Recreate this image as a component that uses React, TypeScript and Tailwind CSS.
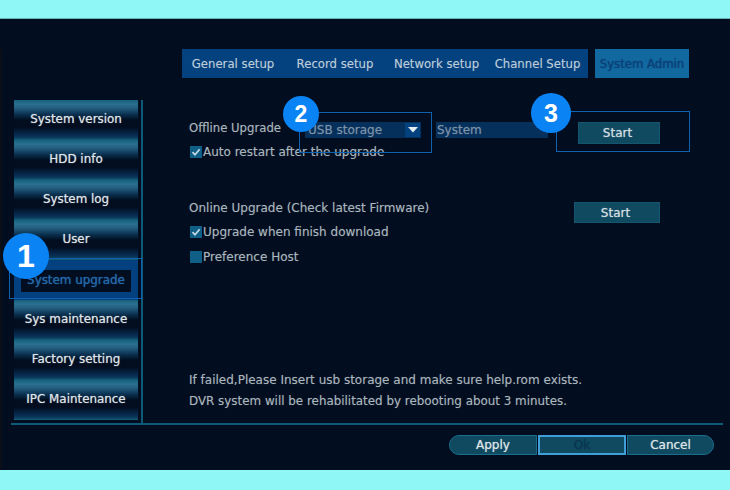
const SIDE = ["System version", "HDD info", "System log", "User", "System upgrade", "Sys maintenance", "Factory setting", "IPC Maintenance"];
const TABS: [string, string][] = [
  ["General setup", "w-[102px]"],
  ["Record setup", "w-[102px]"],
  ["Network setup", "w-[101px]"],
  ["Channel Setup", "w-[101px]"],
];

function Check({ on = true }: { on?: boolean }) {
  return (
    <span className="w-[12px] h-[12px] bg-[#0f5f86] flex items-center justify-center shrink-0">
      {on && (
        <svg width="10" height="10" viewBox="0 0 10 10">
          <path d="M1.5 5.2 L4 7.8 L8.6 2.2" fill="none" stroke="#c8dbe4" strokeWidth="1.7" />
        </svg>
      )}
    </span>
  );
}

function StartBtn({ w }: { w: string }) {
  return (
    <div className={`${w} shrink-0 bg-[#0f4a60] border border-[#14566e] flex items-center justify-center text-[#d5dee3] pr-[3px] [text-shadow:0_0_1px_#ffffff90]`}>
      Start
    </div>
  );
}

function Badge({ n, cls }: { n: number; cls: string }) {
  return (
    <div className={`absolute rounded-full bg-[#0a84f5] text-white font-bold flex items-center justify-center font-['Liberation_Sans',sans-serif] ${cls}`}>
      {n}
    </div>
  );
}

export default function App() {
  return (
    <div className="relative w-[730px] h-[490px] overflow-hidden flex flex-col bg-[#8ff8f6] font-['DejaVu_Sans',sans-serif] text-[12px] leading-[12px] text-[#aab5bc] [text-shadow:0_0_1px_#aab5bc60]">
      <div className="h-[19px] shrink-0 border-b border-[#5fb5b8]" />
      <div className="flex-1 bg-[#020e20] pt-[30px] flex flex-col">
        <div className="flex pl-[182px] h-[29px] text-[#bccedb] text-[11.7px]">
          <div className="flex bg-[#04417f] w-[406px]">
            {TABS.map(([t, w]) => (
              <div key={t} className={`${w} shrink-0 flex items-center justify-center pt-[1px]`}>{t}</div>
            ))}
          </div>
          <div className="ml-[7px] w-[94px] bg-[#11699f] text-[#0b4078] flex items-center justify-center pt-[1px] [text-shadow:0_0_1px_#0b4078]">
            System Admin
          </div>
        </div>

        <div className="flex mt-[22px] h-[323px]">
          <div className="ml-[14px] w-[124px] flex flex-col h-[320px] shrink-0 text-[11.9px]">
            {SIDE.map((s) =>
              s === "System upgrade" ? (
                <div key={s} className="h-[40px] flex pt-[10px] pb-[8px] px-[7px] bg-[#03407f]">
                  <div className="flex-1 bg-[#020e20] flex items-center justify-center pb-[2px] text-[#2468a8] [text-shadow:0_0_1px_#2468a8]">{s}</div>
                </div>
              ) : (
                <div
                  key={s}
                  className="h-[40px] flex items-center justify-center pb-[2px] text-[#dde4e8] [text-shadow:0_0_1px_#ffffffa0] bg-[linear-gradient(180deg,#14607c_0%,#2b6f90_10%,#235f80_20%,#0a3050_36%,#020e20_50%,#020e20_68%,#06264a_84%,#0a3a5c_94%,#14607c_100%)]"
                >
                  {s}
                </div>
              )
            )}
          </div>
          <div className="ml-[3px] w-[2px] h-full bg-[#0d5a78]" />
          <div className="flex-1 pl-[46px] pt-[22px] flex flex-col">
            <div className="flex items-start h-[22px]">
              <span className="w-[116px] shrink-0 text-[11.7px]">Offline Upgrade</span>
              <div className="w-[116px] h-[16px] bg-[#06305c] text-[#7b93a8] pl-[3px] flex items-center justify-between pr-[1px]">
                USB storage
                <span className="w-[15px] h-[14px] bg-[#04417f] flex items-center justify-center">
                  <svg width="10" height="6" viewBox="0 0 10 6"><path d="M0 0 H10 L5 5.5 Z" fill="#e4ecf2" /></svg>
                </span>
              </div>
              <div className="ml-[15px] w-[112px] h-[16px] bg-[#06305c] text-[#7b93a8] pl-[1px] flex items-center">System</div>
              <div className="ml-[30px] h-[22px] flex">
                <StartBtn w="w-[82px]" />
              </div>
            </div>
            <div className="flex items-center gap-[1px] mt-[2px] h-[12px] pl-[1px]">
              <Check /><span>Auto restart after the upgrade</span>
            </div>
            <div className="flex items-start h-[21px] mt-[44px] justify-between pr-[70px]">
              <span>Online Upgrade (Check latest Firmware)</span>
              <div className="h-[21px] flex"><StartBtn w="w-[86px]" /></div>
            </div>
            <div className="flex items-center gap-[1px] mt-[3px] h-[12px] pl-[1px]">
              <Check /><span>Upgrade when finish download</span>
            </div>
            <div className="flex items-center gap-[1px] mt-[13px] h-[12px] pl-[1px]">
              <Check on={false} /><span>Preference Host</span>
            </div>
            <div className="mt-auto pb-[15px] flex flex-col gap-[7px] leading-[14px]">
              <span>If failed,Please Insert usb storage and make sure help.rom exists.</span>
              <span className="text-[11.9px]">DVR system will be rehabilitated by rebooting about 3 minutes.</span>
            </div>
          </div>
        </div>

        <div className="ml-[11px] w-[712px] h-[2px] bg-[#0d5a78]" />

        <div className="flex justify-end pr-[16px] mt-[10px] text-[#dde4e8] [text-shadow:0_0_1px_#ffffffa0]">
          <div className="w-[88px] h-[20px] bg-[#0f4a60] border border-[#1b6d8d] rounded-l-full flex items-center justify-center">Apply</div>
          <div className="w-[88px] h-[20px] mx-[1px] bg-[#0f4a60] border-2 border-[#3f9fd8] flex items-center justify-center text-[#0a3650] [text-shadow:0_0_1px_#0a3650]">Ok</div>
          <div className="w-[87px] h-[20px] bg-[#0f4a60] border border-[#1b6d8d] rounded-r-full flex items-center justify-center">Cancel</div>
        </div>
      </div>
      <div className="h-[20px] shrink-0" />

      <div className="absolute left-0 top-[49px] w-[2px] h-[421px] bg-[#0a0f18]" />
      <div className="absolute left-[9px] top-[258px] w-[133px] h-[41px] border border-[#0e63b0]" />
      <div className="absolute left-[299px] top-[112px] w-[133px] h-[41px] border border-[#0e63b0]" />
      <div className="absolute left-[556px] top-[111px] w-[134px] h-[41px] border border-[#0e63b0]" />
      <Badge n={1} cls="left-[3px] top-[233px] w-[46px] h-[46px] text-[32px] leading-none" />
      <Badge n={2} cls="left-[283px] top-[96px] w-[36px] h-[36px] text-[23px] leading-none" />
      <Badge n={3} cls="left-[531px] top-[93px] w-[40px] h-[40px] text-[25px] leading-none" />
    </div>
  );
}
